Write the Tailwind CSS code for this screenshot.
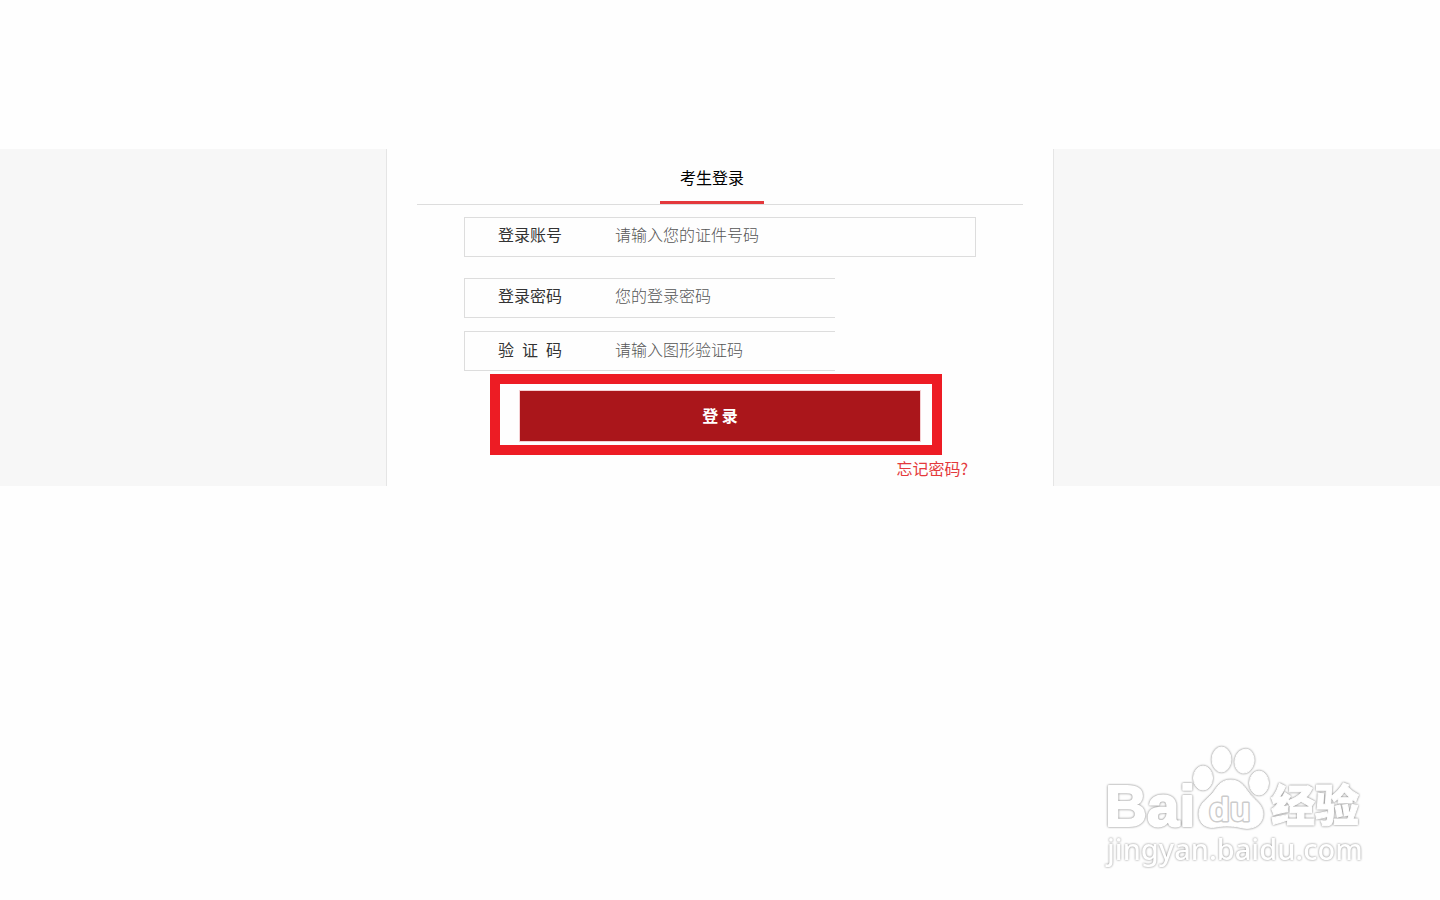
<!DOCTYPE html>
<html lang="zh-CN">
<head>
<meta charset="utf-8">
<meta name="viewport" content="width=device-width, initial-scale=1">
<title>考生登录</title>
<script src="https://cdn.jsdelivr.net/npm/@tailwindcss/browser@4"></script>
</head>
<body class="min-h-screen bg-[#fefefe] font-['Noto_Sans_CJK_SC',sans-serif] text-base leading-6 text-[#333]">
<main class="flex justify-center bg-[#f7f7f7] border-t-[149px] border-[#fefefe]">
  <section class="w-full max-w-[668px] border-x border-[#e5e5e5] bg-[#fefefe] px-[30px]">
    <div class="flex justify-center border-b border-[#ddd] pr-4">
      <h1 class="w-[104px] border-b-[3px] border-[#e4393c] pt-4 pb-3 text-center text-black">考生登录</h1>
    </div>
    <form class="mx-[47px] pt-3">
      <div class="flex h-10 border border-[#ddd]">
        <label for="account" class="w-[130px] pt-1 text-center">登录账号</label>
        <input id="account" type="text" placeholder="请输入您的证件号码" class="min-w-0 flex-1 pb-[6px] pl-5 outline-none placeholder:font-light placeholder:text-[#555]">
      </div>
      <div class="mt-[21px] flex h-10 max-w-[371px] border border-r-0 border-[#ddd]">
        <label for="password" class="w-[130px] pt-1 text-center">登录密码</label>
        <input id="password" type="password" placeholder="您的登录密码" class="min-w-0 flex-1 pb-[6px] pl-5 outline-none placeholder:font-light placeholder:text-[#555]">
      </div>
      <div class="mt-[13px] flex h-10 max-w-[371px] border border-r-0 border-[#ddd]">
        <label for="captcha" class="w-[130px] pt-[5px] text-center">验&ensp;证&ensp;码</label>
        <input id="captcha" type="text" placeholder="请输入图形验证码" class="min-w-0 flex-1 pb-1 pl-5 outline-none placeholder:font-light placeholder:text-[#555]">
      </div>
      <div class="mt-[3px] mr-[34px] ml-[26px] border-10 border-[#ed1c24] pt-[6px] pr-[11px] pb-[3px] pl-[19px]">
        <button type="submit" class="block h-[52px] w-full border border-[#f5cfd2] bg-[#aa161b] pb-[2px] font-bold text-white">登 录</button>
      </div>
      <div class="flex justify-end pt-[1px] pr-2 pb-[6px]">
        <a href="#" class="text-[#e4393c]">忘记密码?</a>
      </div>
    </form>
  </section>
</main>
<svg class="absolute top-[735px] right-[60px] h-[145px] w-[290px]" viewBox="0 0 290 145" role="img" aria-label="Baidu 经验 jingyan.baidu.com">
  <g class="drop-shadow-[0_0_1px_#777]" fill="#fff" stroke="#fff" stroke-width="1" stroke-linejoin="round">
    <text x="15" y="91" font-family="Liberation Sans, sans-serif" font-weight="700" font-size="58" stroke-width="2">Bai</text>
    <ellipse cx="113" cy="43" rx="9.500" ry="12"/>
    <ellipse cx="131.500" cy="24.500" rx="9.500" ry="12.500"/>
    <ellipse cx="154.500" cy="26" rx="9.500" ry="12" transform="rotate(10 154 26)"/>
    <ellipse cx="169" cy="48" rx="9.500" ry="12"/>
    <path d="M140.500 45C131 45 127 52 123 58C118 64 109 68 109 79C109 89 117 94 126 92C136 90 145 91 153 93C164 95 173 89 173 79C173 69 163 64 158 57C154 51 150 45 140.500 45Z"/>
    <text x="181" y="87" font-family="Noto Sans CJK SC, sans-serif" font-weight="900" font-size="44">经验</text>
  </g>
  <text x="119" y="86" fill="#fff" stroke="#ccc" stroke-width="3" stroke-linejoin="round" paint-order="stroke" font-family="Liberation Sans, sans-serif" font-weight="700" font-size="34">du</text>
  <text class="drop-shadow-[0_0_1px_#888]" x="17" y="125" fill="#fff" font-family="Noto Sans, sans-serif" font-weight="500" font-size="29">jingyan.baidu.com</text>
</svg>
</body>
</html>
